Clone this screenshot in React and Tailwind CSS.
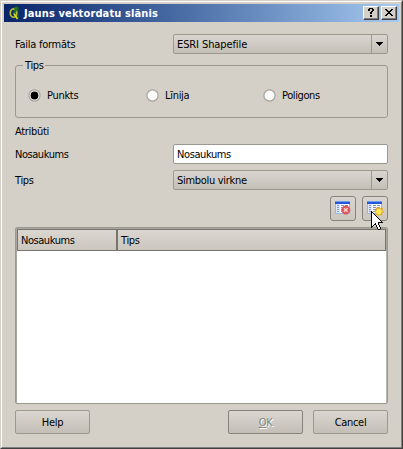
const label = "whitespace-nowrap leading-[14px]";

function Combo({ children, className }) {
  return (
    <div className="flex h-5 w-[215px] rounded-[2px] border border-[#9b9890] bg-linear-to-b from-[#dbd7d0] to-[#c3bfb7]">
      <div className={`grow pt-[3px] pl-[3px] ${label} ${className}`}>{children}</div>
      <div className="flex w-4 items-center justify-center border-l border-[#9b9890]">
        <svg width="7" height="4" viewBox="0 0 7 4" shapeRendering="crispEdges">
          <path d="M0 0h7v1H0zM1 1h5v1H1zM2 2h3v1H2zM3 3h1v1H3z" />
        </svg>
      </div>
    </div>
  );
}

function Radio({ checked, text, className }) {
  return (
    <div className={`flex items-center gap-[6px] ${className}`}>
      <svg width="13" height="13" viewBox="0 0 13 13">
        <circle cx="6.5" cy="6.5" r="5.6" fill="#fbfbfa" stroke="#a5a39d" strokeWidth="1.2" />
        {checked && <circle cx="6.5" cy="6.5" r="3.9" fill="#000" />}
      </svg>
      <span className={label}>{text}</span>
    </div>
  );
}

function Button({ children, className }) {
  return (
    <button className={`flex h-6 w-[75px] items-center justify-center rounded-[2px] border bg-linear-to-b from-[#dbd7d0] to-[#c3bfb7] pt-[2px] ${className}`}>
      {children}
    </button>
  );
}

function TableIcon({ kind }) {
  return (
    <svg width="17" height="15" viewBox="0 0 17 15" shapeRendering="crispEdges">
      <path fill="#f4f7fd" d="M0 1h15v12H0z" />
      <path fill="#2458d6" d="M0 0h15v3H0z" />
      <path fill="#6b9bf3" d="M0 0h15v1H0z" />
      <path fill="#dce7fb" d="M1 3h4v10H1z" />
      <path fill="#9db4e6" d="M0 3h1v10H0zM14 3h1v10h-1zM0 12h15v1H0z" />
      <path fill="#8b95ab" d="M2 4h2v1H2zM6 4h3v1H6zM10 4h3v1h-3zM2 6h2v1H2zM6 6h3v1H6zM10 6h3v1h-3zM2 8h2v1H2zM6 8h3v1H6zM2 10h2v1H2zM6 10h2v1H6z" />
      {kind === "delete" ? (
        <g shapeRendering="auto">
          <circle cx="10.8" cy="9" r="4.2" fill="#e0585c" stroke="#cf5459" strokeWidth=".6" />
          <path d="M9 7.2l3.6 3.6M12.6 7.2L9 10.8" stroke="#fbd9d9" strokeWidth="1.3" />
        </g>
      ) : (
        <path
          shapeRendering="auto"
          fill="#ffe65e"
          stroke="#dfa51c"
          strokeWidth="1"
          d="M12 6l1 2 2.4-.7-.7 2.3 1.8 1.2-2 1 .4 2.1-2-.5-1.2 1.2-1-1.4-2.2.4.6-2.1-1.6-1.4 2-.8-.3-2.2 2 .8z"
        />
      )}
    </svg>
  );
}

function ToolButton({ kind }) {
  return (
    <button className="flex h-[25px] w-[26px] items-start rounded-[3px] border border-[#85837c] bg-linear-to-b from-[#dad6cf] to-[#cbc7bf] pt-[4px] pl-[4px]">
      <TableIcon kind={kind} />
    </button>
  );
}

function CaptionButton({ children }) {
  return (
    <button className="flex h-[14px] w-4 items-center justify-center border border-t-white border-r-[#404040] border-b-[#404040] border-l-white bg-[#d4d0c8] shadow-[inset_-1px_-1px_0_#808080]">
      {children}
    </button>
  );
}

// Arrow pointer bitmap: "#" is outline, "." is fill.
const pointer = [
  "#",
  "##",
  "#.#",
  "#..#",
  "#...#",
  "#....#",
  "#.....#",
  "#......#",
  "#.......#",
  "#........#",
  "#.........#",
  "#......#####",
  "#...#..#",
  "#..##..#",
  "#.#  #..#",
  "##   #..#",
  "#     #..#",
  "      #..#",
  "       ##",
];

function Pointer() {
  return (
    <svg className="absolute top-[210px] left-[370px]" width="12" height="19" viewBox="0 0 12 19" shapeRendering="crispEdges">
      {pointer.flatMap((row, y) =>
        [...row].map((c, x) =>
          c === " " ? null : <rect key={`${x}-${y}`} x={x} y={y} width="1" height="1" fill={c === "#" ? "#000" : "#fff"} />
        )
      )}
    </svg>
  );
}

export default function App() {
  return (
    <div className="relative h-[449px] w-[403px] overflow-hidden border border-t-[#d4d0c8] border-r-[#404040] border-b-[#404040] border-l-[#d4d0c8] bg-[#d4d0c8] font-['DejaVu_Sans_Condensed','DejaVu_Sans',sans-serif] text-[11px] tracking-[-0.3px] text-black">
      <div className="h-[447px] border border-t-white border-r-[#808080] border-b-[#808080] border-l-white px-[2px] pt-[2px]">
        <header className="flex h-[18px] items-center gap-[2px] bg-linear-to-r from-[#0a246a] to-[#a6caf0] pr-[2px] pl-[5px]">
          <svg width="11" height="14" viewBox="0 0 11 14">
            <path d="M4 2L8 0l2 2-1 4 1 7-4-3z" fill="#175c25" />
            <ellipse cx="4.5" cy="7" rx="3.2" ry="4.2" fill="none" stroke="#b5bd28" strokeWidth="1.7" />
            <path d="M4.5 7l4 6" stroke="#d8d92b" strokeWidth="1.6" />
            <path d="M6 1l3 1-2 4-3 3z" fill="#1f702b" />
          </svg>
          <h1 className="ml-[2px] grow pt-[2px] text-[11px] leading-[16px] font-bold tracking-[0.12px] whitespace-nowrap text-white">Jauns vektordatu slānis</h1>
          <div className="flex gap-[2px]">
            <CaptionButton>
              <svg width="6" height="9" viewBox="0 0 6 9" shapeRendering="crispEdges" className="mb-px">
                <path d="M1 0h4v1H1zM0 1h2v2H0zM4 1h2v2H4zM3 3h2v1H3zM2 4h2v2H2zM2 7h2v2H2z" />
              </svg>
            </CaptionButton>
            <CaptionButton>
              <svg width="8" height="7" viewBox="0 0 8 7" shapeRendering="crispEdges" className="mb-px">
                <path d="M0 0h2v1H0zM6 0h2v1H6zM1 1h2v1H1zM5 1h2v1H5zM2 2h4v1H2zM3 3h2v1H3zM2 4h4v1H2zM1 5h2v1H1zM5 5h2v1H5zM0 6h2v1H0zM6 6h2v1H6z" />
              </svg>
            </CaptionButton>
          </div>
        </header>

        <main className="px-[11px] pt-3">
          <div className="flex h-5 items-center justify-between">
            <span className={`pt-[2px] tracking-[-0.25px] ${label}`}>Faila formāts</span>
            <Combo className="tracking-[-0.1px]">ESRI Shapefile</Combo>
          </div>

          <section className="mt-[11px] h-[53px] rounded-[3px] border border-[#9b9890]">
            <div className={`-mt-[7px] ml-[7px] w-[22px] bg-[#d4d0c8] pl-[2px] ${label}`}>Tips</div>
            <div className="mt-[16px] flex h-[13px] pl-[12px]">
              <Radio checked text="Punkts" className="w-[118px]" />
              <Radio text="Līnija" className="w-[117px]" />
              <Radio text="Poligons" className="tracking-[-0.4px]" />
            </div>
          </section>

          <div className={`mt-[7px] ${label}`}>Atribūti</div>

          <div className="mt-[5px] flex h-5 items-center justify-between">
            <span className={`pt-[2px] tracking-[-0.45px] ${label}`}>Nosaukums</span>
            <div className={`h-5 w-[215px] rounded-[2px] border border-[#9b9890] bg-white pt-[3px] pl-[3px] tracking-[-0.4px] ${label}`}>Nosaukums</div>
          </div>
          <div className="mt-[6px] flex h-5 items-center justify-between">
            <span className={`pt-[2px] ${label}`}>Tips</span>
            <Combo>Simbolu virkne</Combo>
          </div>

          <div className="mt-[6px] flex justify-end gap-[6px]">
            <ToolButton kind="delete" />
            <ToolButton kind="add" />
          </div>

          <div className="mt-[6px] h-[177px] rounded-[2px] border border-[#9b9890] bg-white shadow-[inset_1px_0_0_#aaa79f,inset_-1px_0_0_#b9b6ae]">
            <div className="flex h-[23px] border-t border-r border-l border-[#aaa79f] bg-[#aaa79f]">
              <div className={`h-[22px] w-[100px] border border-[#77746d] bg-linear-to-b from-[#dbd7d0] to-[#cbc7bf] pt-[4px] pl-[3px] tracking-[-0.45px] ${label}`}>Nosaukums</div>
              <div className={`h-[22px] grow border border-[#77746d] bg-linear-to-b from-[#dbd7d0] to-[#cbc7bf] pt-[4px] pl-[3px] ${label}`}>Tips</div>
            </div>
          </div>

          <footer className="mt-[6px] flex">
            <Button className="border-[#9b9890]">Help</Button>
            <Button className="ml-auto border-[#85837c] text-[#85837c] [text-shadow:1px_1px_0_#fff]">
              <span className="underline underline-offset-1">O</span>K
            </Button>
            <Button className="ml-[10px] border-[#9b9890]">Cancel</Button>
          </footer>
        </main>
      </div>

      <Pointer />
    </div>
  );
}
